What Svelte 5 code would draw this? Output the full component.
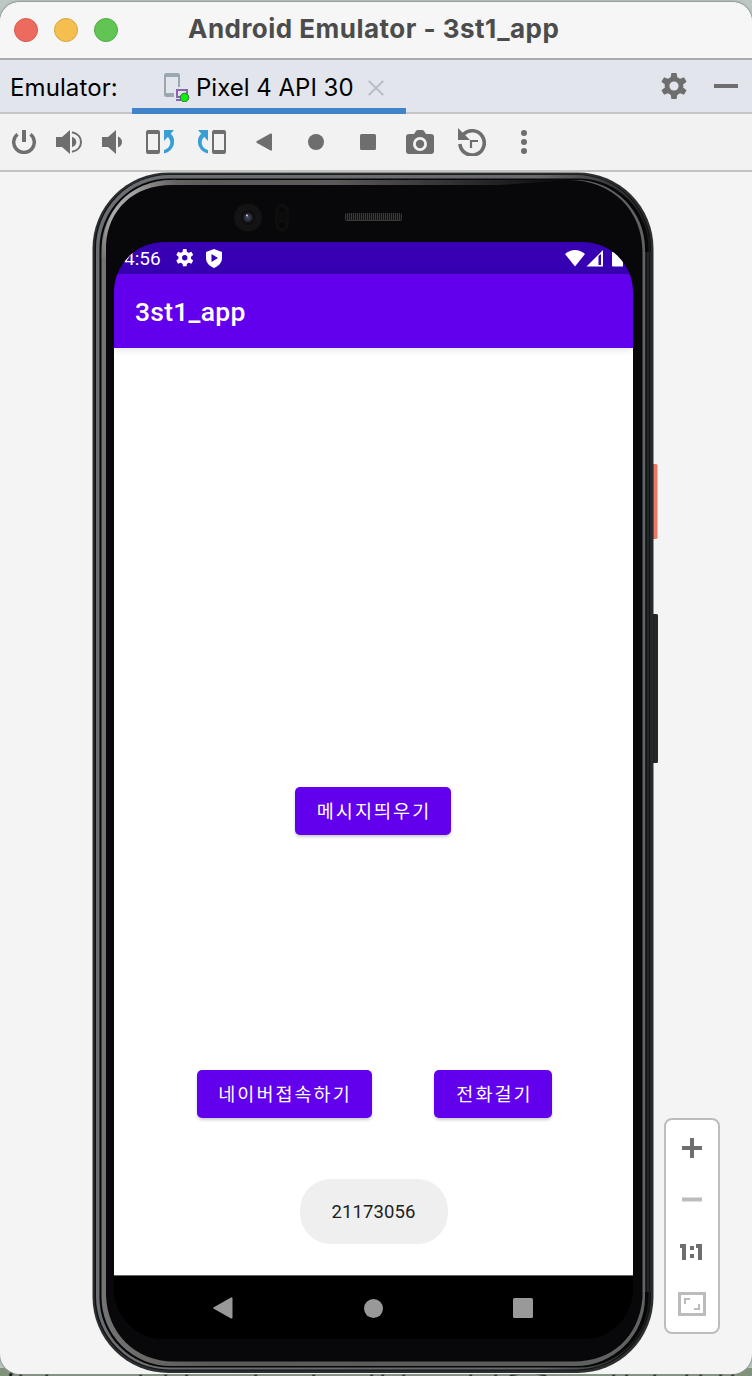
<script>
  const speaker = 'M0 7h6l8-7v24l-8-7H0z';
  const gearTeeth = [0, 60, 120, 180, 240, 300];
  const grille = Array.from({ length: 28 }, (_, i) => 346.5 + i * 2);
  const scribbles = [10, 20, 46, 140, 165, 186, 255, 313, 371, 382, 403, 470, 495, 613, 626, 654, 686, 700, 720, 732];
</script>

{#snippet gear(size, hole)}
  <svg width={size} height={size} viewBox="-13 -13 26 26">
    <defs>
      <mask id="hole-{size}">
        <rect x="-13" y="-13" width="26" height="26" fill="#fff" />
        <circle r={hole} fill="#000" />
      </mask>
    </defs>
    <g fill="currentColor" mask="url(#hole-{size})">
      <circle r="9.4" />
      {#each gearTeeth as a}
        <path d="M-3.5-7l.9-6h5.2l.9 6z" transform="rotate({a})" />
      {/each}
    </g>
  </svg>
{/snippet}

<div class="desktop">
  <svg class="wallpaper" width="752" height="8" viewBox="0 0 752 8">
    <rect width="752" height="8" fill="#80927a" />
    {#each scribbles as x}
      <path d="M{x} 8l3-5" stroke="#1c1517" stroke-width="3" />
    {/each}
    <path d="M510 8q18-8 36 0" stroke="#1c1517" stroke-width="3" fill="none" />
  </svg>

  <div class="window">
    <header class="titlebar">
      <div class="lights"><i class="close"></i><i class="min"></i><i class="max"></i></div>
      <h1>Android Emulator - 3st1_app</h1>
    </header>

    <div class="tabs">
      <span class="label">Emulator:</span>
      <div class="tab">
        <svg width="26" height="29" viewBox="0 0 26 29">
          <path d="M2.500 0h11a2.500 2.500 0 0 1 2.500 2.500V14h-2V4H2v16h8v4H2.500A2.500 2.500 0 0 1 0 21.500v-19A2.500 2.500 0 0 1 2.500 0z" fill="#9aa7b0" />
          <path d="M13 17h10v7H13zM12 27h7" fill="none" stroke="#8a63b5" stroke-width="2" />
          <circle cx="20.500" cy="24.500" r="4.300" fill="#0af00a" stroke="#36713c" />
        </svg>
        <span>Pixel 4 API 30</span>
        <svg class="x" width="16" height="16" viewBox="0 0 16 16"><path d="M.8.800l14.400 14.400M15.200.800L.8 15.200" stroke="#b1b9c5" stroke-width="1.800" /></svg>
      </div>
      <div class="tabtools">
        {@render gear(26, 4.6)}
        <svg width="24" height="4"><rect width="24" height="4" fill="currentColor" /></svg>
      </div>
    </div>

    <div class="toolbar">
      <svg class="t0" width="24" height="24" viewBox="0 0 24 24"><path d="M5.500 4.200A10.300 10.300 0 1 0 18.500 4.200" fill="none" stroke="currentColor" stroke-width="3.400" /><path d="M10 0h4v12h-4z" fill="currentColor" /></svg>
      <svg class="t1" width="26" height="24" viewBox="0 0 26 24"><path d={speaker} fill="currentColor" /><path d="M16 6.800q4.300 1.500 4.300 5.200T16 17.200z" fill="currentColor" /><path d="M16 2.200c12 2.500 12 17.100 0 19.600" fill="none" stroke="currentColor" stroke-width="2" /></svg>
      <svg class="t2" width="20" height="24" viewBox="0 0 20 24"><path d={speaker} fill="currentColor" /><path d="M16 6.500q4 2 4 5.500t-4 5.500z" fill="currentColor" /></svg>
      <svg class="t3" width="28" height="24" viewBox="0 0 28 24"><path d="M2 0h10a2 2 0 0 1 2 2v20a2 2 0 0 1-2 2H2a2 2 0 0 1-2-2V2a2 2 0 0 1 2-2zm0 4v16h10V4z" fill="currentColor" fill-rule="evenodd" /><path d="M18 0h10l-3.300 3.700C28.500 7 29 12 27 16.500Q24.500 22 18 23.500v-3.600C25 18 26 10.500 21.700 7.100L18 11z" fill="#389fd6" /></svg>
      <svg class="t4" width="28" height="24" viewBox="0 0 28 24"><g transform="matrix(-1 0 0 1 28 0)"><path d="M2 0h10a2 2 0 0 1 2 2v20a2 2 0 0 1-2 2H2a2 2 0 0 1-2-2V2a2 2 0 0 1 2-2zm0 4v16h10V4z" fill="currentColor" fill-rule="evenodd" /><path d="M18 0h10l-3.300 3.700C28.500 7 29 12 27 16.500Q24.500 22 18 23.500v-3.600C25 18 26 10.500 21.700 7.100L18 11z" fill="#389fd6" /></g></svg>
      <svg class="t5" width="16" height="18" viewBox="0 0 16 18"><path d="M14.500.500Q16 0 16 1.500v15q0 1.500-1.500 1L1 10Q-.5 9 1 8z" fill="currentColor" /></svg>
      <svg class="t6" width="16" height="16" viewBox="0 0 16 16"><circle cx="8" cy="8" r="8" fill="currentColor" /></svg>
      <svg class="t7" width="16" height="16" viewBox="0 0 16 16"><rect width="16" height="16" rx="1.500" fill="currentColor" /></svg>
      <svg class="t8" width="28" height="24" viewBox="0 0 28 24"><path fill-rule="evenodd" d="M3 4h5l2-3q.6-1 2-1h4q1.400 0 2 1l2 3h5q3 0 3 3v14q0 3-3 3H3q-3 0-3-3V7q0-3 3-3zm11 3a7 7 0 1 0 0 14 7 7 0 0 0 0-14z" fill="currentColor" /><circle cx="14" cy="14" r="4.200" fill="currentColor" /></svg>
      <svg class="t9" width="28" height="28" viewBox="0 0 28 28"><path d="M5.500 6.200A12.200 12.200 0 1 1 1.900 16" fill="none" stroke="currentColor" stroke-width="3.600" /><path d="M0 0l12 12H0z" fill="currentColor" /><path d="M13 20v-7h7" fill="none" stroke="currentColor" stroke-width="2.200" /></svg>
      <svg class="t10" width="6" height="24" viewBox="0 0 6 24"><g fill="currentColor"><circle cx="3" cy="3" r="3" /><circle cx="3" cy="12" r="3" /><circle cx="3" cy="21" r="3" /></g></svg>
    </div>

    <main class="stage">
      <svg class="frame" width="752" height="1202" viewBox="0 172 752 1202">
        <defs>
          <linearGradient id="rim"><stop offset="0" stop-color="#6a6d72" /><stop offset=".8" stop-color="#686a6d" /><stop offset=".97" stop-color="#292b2d" /><stop offset="1" stop-color="#1c1e1f" /></linearGradient>
          <linearGradient id="glass"><stop offset="0" stop-color="#737473" /><stop offset=".2" stop-color="#5c5a59" /><stop offset=".8" stop-color="#5c5c5c" /><stop offset="1" stop-color="#626464" /></linearGradient>
          <linearGradient id="shine" gradientUnits="userSpaceOnUse" x1="95" y1="250" x2="180" y2="178"><stop offset="0" stop-color="#737473" /><stop offset=".3" stop-color="#aaa" /><stop offset=".6" stop-color="#a2a2a2" /><stop offset="1" stop-color="#5c5a59" /></linearGradient>
          <linearGradient id="topfade" gradientUnits="userSpaceOnUse" x1="330" y1="0" x2="570" y2="0"><stop offset="0" stop-color="#08080a" stop-opacity="0" /><stop offset="1" stop-color="#08080a" /></linearGradient>
          <radialGradient id="lens"><stop offset="0" stop-color="#464c66" /><stop offset=".45" stop-color="#20232d" /><stop offset=".55" stop-color="#0d0d0e" /><stop offset="1" stop-color="#151516" /></radialGradient>
        </defs>
        <rect x="651" y="464" width="6.500" height="75" rx="1.500" fill="#e87963" />
        <rect x="652" y="464" width="1.500" height="75" fill="#a75748" />
        <rect x="651" y="614" width="7" height="149" rx="1.500" fill="#262626" />
        <rect x="652" y="614" width="2" height="149" fill="#111" />
        <rect x="92.500" y="172.500" width="561" height="1200.500" rx="76" fill="#2c2e2f" />
        <rect x="94.500" y="174.500" width="556.500" height="1196" rx="74" fill="#111213" />
        <rect x="96" y="175" width="553.500" height="1194.500" rx="73" fill="url(#rim)" />
        <rect x="99.500" y="178.500" width="549" height="1189" rx="70" fill="#070708" />
        <rect x="645" y="252" width="7.500" height="1040" fill="#25282a" />
        <rect x="646" y="252" width="1" height="1040" fill="#111213" /><rect x="649" y="252" width="1" height="1040" fill="#121314" />
        <rect x="101.500" y="180" width="543.500" height="1186" rx="69" fill="url(#glass)" />
        <path d="M104 258C104 213 127 183 176 182" fill="none" stroke="url(#shine)" stroke-width="4.600" />
        <path d="M106 245C108 210 133 185 172 185H500L568 180C612 180 642.500 210 642.500 252V1298C639 1337 612 1361.500 574 1361.500H174C135 1361.500 107 1333 106 1295z" fill="#08080a" />
        <path d="M330 180H570V186H330z" fill="url(#topfade)" />
        <circle cx="248" cy="217.500" r="14" fill="#131314" />
        <circle cx="248" cy="217.500" r="9.500" fill="url(#lens)" />
        <circle cx="247" cy="215.500" r="1" fill="#d1d6e5" />
        <rect x="276" y="204" width="12" height="27" rx="6" fill="#0b0b0c" stroke="#131314" />
        <circle cx="282" cy="210" r="4" fill="#080809" stroke="#121213" /><circle cx="282" cy="225" r="4" fill="#080809" stroke="#121213" />
        <rect x="345" y="213" width="57" height="8" rx="2" fill="#3a3a39" />
        {#each grille as x}<path d="M{x} 213v7" stroke="#111" />{/each}
      </svg>

      <section class="screen">
        <div class="status">
          <span>4:56</span>
          <div class="notes">
            {@render gear(17.5, 4)}
            <svg width="16" height="19" viewBox="0 0 16 19"><path fill-rule="evenodd" d="M8 0l8 3v6c0 5-3.500 8-8 10-4.500-2-8-5-8-10V3zM5.500 5v8l6.500-4z" fill="#fff" /></svg>
          </div>
          <svg class="signals" width="60" height="17" viewBox="0 0 60 17" fill="#fff"><path d="M0 4Q10-4 20 4L10 16.500z" /><path d="M38 0v16.500H21.500zM33.500 6v9H36V4z" fill-rule="evenodd" /><path d="M47 2h3V0h5v2h3v14.500H48q-1 0-1-1z" /></svg>
        </div>
        <div class="appbar">3st1_app</div>
        <div class="content">
          <button class="msg">메시지띄우기</button>
          <div class="row">
            <button class="naver">네이버접속하기</button>
            <button class="call">전화걸기</button>
          </div>
          <div class="toast">21173056</div>
        </div>
        <nav>
          <svg width="20" height="22" viewBox="0 0 20 22"><path d="M18 .400q1.500-.6 1.500 1v19q0 1.600-1.500 1L.8 11.800q-1.200-.8 0-1.600z" fill="#999" /></svg>
          <svg width="20" height="20" viewBox="0 0 20 20"><circle cx="10.500" cy="10.500" r="9.500" fill="#999" /></svg>
          <svg width="20" height="20" viewBox="0 0 20 20"><rect width="20" height="20" rx="1.500" fill="#999" /></svg>
        </nav>
      </section>

      <div class="zoom">
        <svg width="20" height="20" viewBox="0 0 20 20"><path d="M8 0h4v8h8v4h-8v8H8v-8H0V8h8z" fill="#6e6e6e" /></svg>
        <svg width="20" height="20" viewBox="0 0 20 20"><path d="M0 8.500h20v4H0z" fill="#bcbcbc" /></svg>
        <svg width="24" height="20" viewBox="0 0 24 20"><path d="M0 3h6v16H2V7H0zM16 3h6v16h-4V7h-2zM10 5h4v4h-4zM10 13h4v4h-4z" fill="#6e6e6e" /></svg>
        <svg width="28" height="24" viewBox="0 0 28 24"><path d="M1.500 1.500h25v21h-25z" fill="none" stroke="#bcbcbc" stroke-width="3" /><path d="M7 12V7h5M21 12v5h-5" fill="none" stroke="#bcbcbc" stroke-width="2" /></svg>
      </div>
    </main>
  </div>
</div>

<style>
  :global(body) { margin: 0; }
  * { box-sizing: border-box; }
  svg { display: block; flex: none; }
  .desktop { position: relative; width: 752px; height: 1376px; padding: 2px 0; overflow: hidden; background: #bdc7c4; font-family: Inter, "Noto Sans CJK KR", sans-serif; }
  .wallpaper { position: absolute; left: 0; bottom: 0; }
  .window { position: relative; height: 1372px; display: flex; flex-direction: column; border-radius: 20px; overflow: hidden; background: #f4f4f4; box-shadow: 0 0 2px 1px #8b9490; }
  .titlebar { height: 58px; flex: none; display: grid; grid-template-columns: 188px 1fr; align-items: center; background: #f6f6f6; border-bottom: 2px solid #aaa; }
  .lights { display: flex; gap: 16px; padding-left: 14px; }
  .lights i { width: 24px; height: 24px; border-radius: 50%; border: 1px solid; }
  .close { background: #ed6a5e; border-color: #d45b50 !important; }
  .min { background: #f5bf4f; border-color: #d9a43e !important; }
  .max { background: #61c554; border-color: #50aa43 !important; }
  h1 { margin: 0; padding-bottom: 2px; font-size: 26px; line-height: 30px; font-weight: 700; color: #4c4c4c; white-space: nowrap; letter-spacing: .48px; }
  .tabs { height: 54px; flex: none; display: flex; background: #e2e5eb; border-bottom: 2px solid #c6c6c6; font-size: 24px; line-height: 56px; color: #000; white-space: nowrap; }
  .label { width: 132px; padding-left: 10px; letter-spacing: .1px; }
  .tab { width: 274px; height: 54px; display: flex; align-items: center; padding: 0 22px 0 32px; border-bottom: 6px solid #4083c9; }
  .tab > svg:first-child { margin-top: 6px; }
  .tab span { width: 172px; margin-left: 6px; padding-top: 8px; }
  .x { margin-top: 8px; }
  .tabtools { margin-left: auto; display: flex; align-items: center; gap: 27px; padding-right: 14px; color: #6e6e6e; }
  .toolbar { height: 58px; flex: none; display: flex; align-items: center; padding-left: 12px; background: #f2f2f2; border-bottom: 2px solid #c3c3c3; color: #6e6e6e; }
  .t1 { margin-left: 20px; } .t2 { margin-left: 20px; } .t3 { margin-left: 24px; } .t4 { margin-left: 24px; }
  .t5 { margin-left: 30px; } .t6 { margin-left: 36px; } .t7 { margin-left: 36px; } .t8 { margin-left: 30px; } .t9 { margin-left: 24px; } .t10 { margin-left: 35px; }
  .stage { position: relative; flex: 1; display: flex; align-items: flex-start; padding-left: 114px; }
  .frame { position: absolute; inset: 0; }
  .screen { position: relative; width: 519px; height: 1097px; margin-top: 70px; flex: none; display: flex; flex-direction: column; overflow: hidden; border-radius: 50px; background: #000; font-family: Roboto, "Noto Sans CJK KR", sans-serif; }
  .status { height: 32px; flex: none; display: flex; align-items: center; padding: 0 8px 0 10px; background: #3700b3; color: #fff; font-size: 19px; }
  .status span { width: 52px; white-space: nowrap; }
  .notes { display: flex; align-items: center; gap: 12px; }
  .signals { margin-left: auto; }
  .appbar { position: relative; height: 74px; flex: none; padding: 1px 0 0 21px; background: #6200ee; color: #fff; font-size: 26.500px; line-height: 74px; font-weight: 500; letter-spacing: .25px; box-shadow: 0 1px 8px #0002; }
  .content { flex: 1; display: flex; flex-direction: column; align-items: center; background: #fff; }
  button { height: 48px; padding: 0 0 0 2px; border: 0; border-radius: 5px; background: #6200ee; color: #fff; font: 400 18.500px/50px Roboto, "Noto Sans CJK KR", sans-serif; letter-spacing: 2.050px; text-align: center; white-space: nowrap; box-shadow: 0 2px 3px #0003; }
  .msg { width: 156px; margin: 439px 1px 0 0; }
  .row { display: flex; gap: 62px; margin-top: 235px; padding-left: 1px; }
  .naver { width: 175px; } .call { width: 118px; padding-left: 4px; }
  .toast { width: 148px; height: 65px; margin: 61px 0 0; border-radius: 31px; background: #efefef; color: #212121; font-size: 18.500px; line-height: 67px; letter-spacing: .1px; text-align: center; }
  nav { height: 64px; flex: none; display: flex; align-items: center; justify-content: space-between; padding: 0 100px 0 99px; background: #000; border-top: 1px solid #666; }
  .zoom { position: relative; width: 56px; height: 216px; margin: 946px 0 0 31px; display: flex; flex-direction: column; align-items: center; justify-content: space-between; padding: 18px 0 16px; border: 2px solid #bdbdbd; border-radius: 8px; background: #fff; }
</style>
